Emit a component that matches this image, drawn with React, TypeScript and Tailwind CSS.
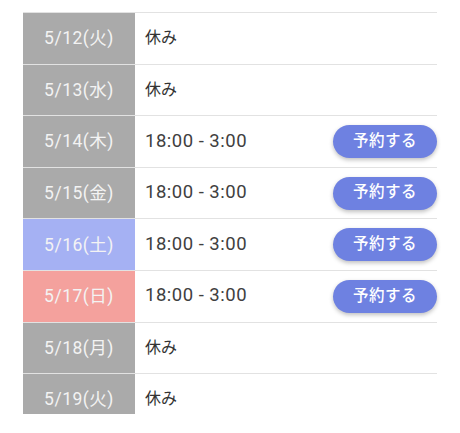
import React from "react";

type Row = { date: string; kind: "gray" | "sat" | "sun"; open: boolean };

const rows: Row[] = [
  { date: "5/12(火)", kind: "gray", open: false },
  { date: "5/13(水)", kind: "gray", open: false },
  { date: "5/14(木)", kind: "gray", open: true },
  { date: "5/15(金)", kind: "gray", open: true },
  { date: "5/16(土)", kind: "sat", open: true },
  { date: "5/17(日)", kind: "sun", open: true },
  { date: "5/18(月)", kind: "gray", open: false },
  { date: "5/19(火)", kind: "gray", open: false },
];

function RowView({ r }: { r: Row }) {
  const bg =
    r.kind === "sat" ? "bg-[#a5b1f3]" : r.kind === "sun" ? "bg-[#f4a19d]" : "bg-[#aaaaaa]";
  return (
    <div className="flex h-[51.6px] border-b border-[#e2e2e2]">
      <div
        className={`w-[112px] shrink-0 ${bg} flex items-center justify-center text-[17.5px] text-[#f3f3f3] tracking-[0.5px]`}
      >
        {r.date}
      </div>
      <div className="flex-1 flex items-center justify-between pl-[10px]">
        {r.open ? (
          <>
            <span className="text-[18.5px] text-[#404040] tracking-[0.5px]">18:00 - 3:00</span>
            <button className="w-[104px] h-[33px] rounded-full bg-[#6e81e1] text-white text-[15.5px] font-medium shadow-[0_2px_4px_rgba(0,0,0,0.25)] flex items-center justify-center tracking-[0.5px]">
              予約する
            </button>
          </>
        ) : (
          <span className="text-[16px] text-[#333333]">休み</span>
        )}
      </div>
    </div>
  );
}

export default function App() {
  return (
    <div
      className="w-[460px] h-[433px] bg-white overflow-hidden"
      style={{ fontFamily: 'Roboto, "Noto Sans CJK JP", sans-serif' }}
    >
      <div className="mx-[23px] mt-[12px] border-t border-[#e2e2e2]">
        {rows.slice(0, 7).map((r) => (
          <RowView key={r.date} r={r} />
        ))}
        <div className="h-[40px] overflow-hidden">
          <RowView r={rows[7]} />
        </div>
      </div>
    </div>
  );
}
